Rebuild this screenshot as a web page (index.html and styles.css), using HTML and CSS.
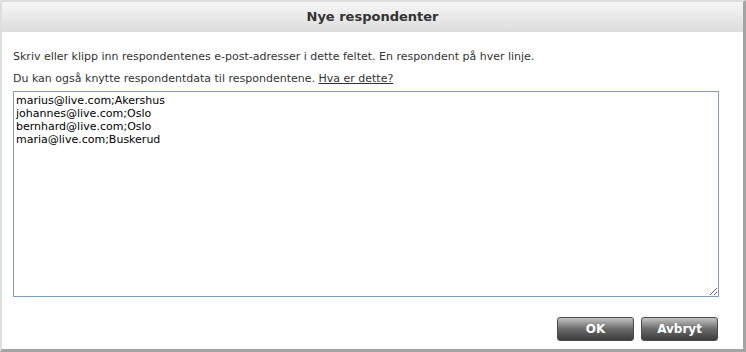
FILE: index.html
```html
<!DOCTYPE html>
<html lang="no">
<head>
    <meta charset="UTF-8">
    <title>Nye respondenter</title>
    <link rel="stylesheet" href="styles.css">
</head>
<body>
    <div class="dialog">
        <div class="dialog-header">Nye respondenter</div>
        <div class="dialog-body">
            <p class="intro">Skriv eller klipp inn respondentenes e-post-adresser i dette feltet. En respondent på hver linje.</p>
            <p class="intro">Du kan også knytte respondentdata til respondentene. <a href="#">Hva er dette?</a></p>
            <textarea class="recipients">marius@live.com;Akershus
johannes@live.com;Oslo
bernhard@live.com;Oslo
maria@live.com;Buskerud</textarea>
        </div>
        <div class="dialog-footer">
            <button class="btn">OK</button>
            <button class="btn">Avbryt</button>
        </div>
    </div>
</body>
</html>
```

FILE: styles.css
```css
body {
    margin: 0;
    background: #fff;
    font-family: "DejaVu Sans", Verdana, sans-serif;
    color: #222;
}
.dialog {
    width: 741px;
    height: 347px;
    border-top: 2px solid #dedede;
    border-left: 2px solid #dedede;
    border-right: 3px solid #a4a4a4;
    border-bottom: 3px solid #a4a4a4;
    background: #fff;
    display: flex;
    flex-direction: column;
}
.dialog-header {
    height: 30px;
    line-height: 30px;
    text-align: center;
    font-weight: bold;
    font-size: 13px;
    color: #333;
    background: linear-gradient(#f6f6f6, #dcdcdc);
}
.dialog-body {
    padding: 18px 25px 0 11px;
}
.intro {
    margin: 0 0 8px;
    font-size: 11px;
    line-height: 14px;
    color: #333;
}
.intro + .intro {
    margin-bottom: 5px;
}
.intro a {
    color: #333;
}
.recipients {
    display: block;
    box-sizing: border-box;
    width: 706px;
    height: 206px;
    margin: 0;
    padding: 2px 2px;
    border: 1px solid #7f9db9;
    font-family: "DejaVu Sans", Verdana, sans-serif;
    font-size: 11px;
    line-height: 13px;
    color: #000;
    resize: both;
}
.dialog-footer {
    display: flex;
    justify-content: flex-end;
    gap: 7px;
    padding: 20px 25px 0 0;
}
.btn {
    width: 77px;
    height: 24px;
    border: 1px solid #4a4a4a;
    border-radius: 3px;
    background: linear-gradient(#c4c4c4, #6a6a6a 50%, #3c3c3c);
    color: #fff;
    font-family: "DejaVu Sans", sans-serif;
    font-weight: bold;
    font-size: 12px;
    cursor: pointer;
}
```
